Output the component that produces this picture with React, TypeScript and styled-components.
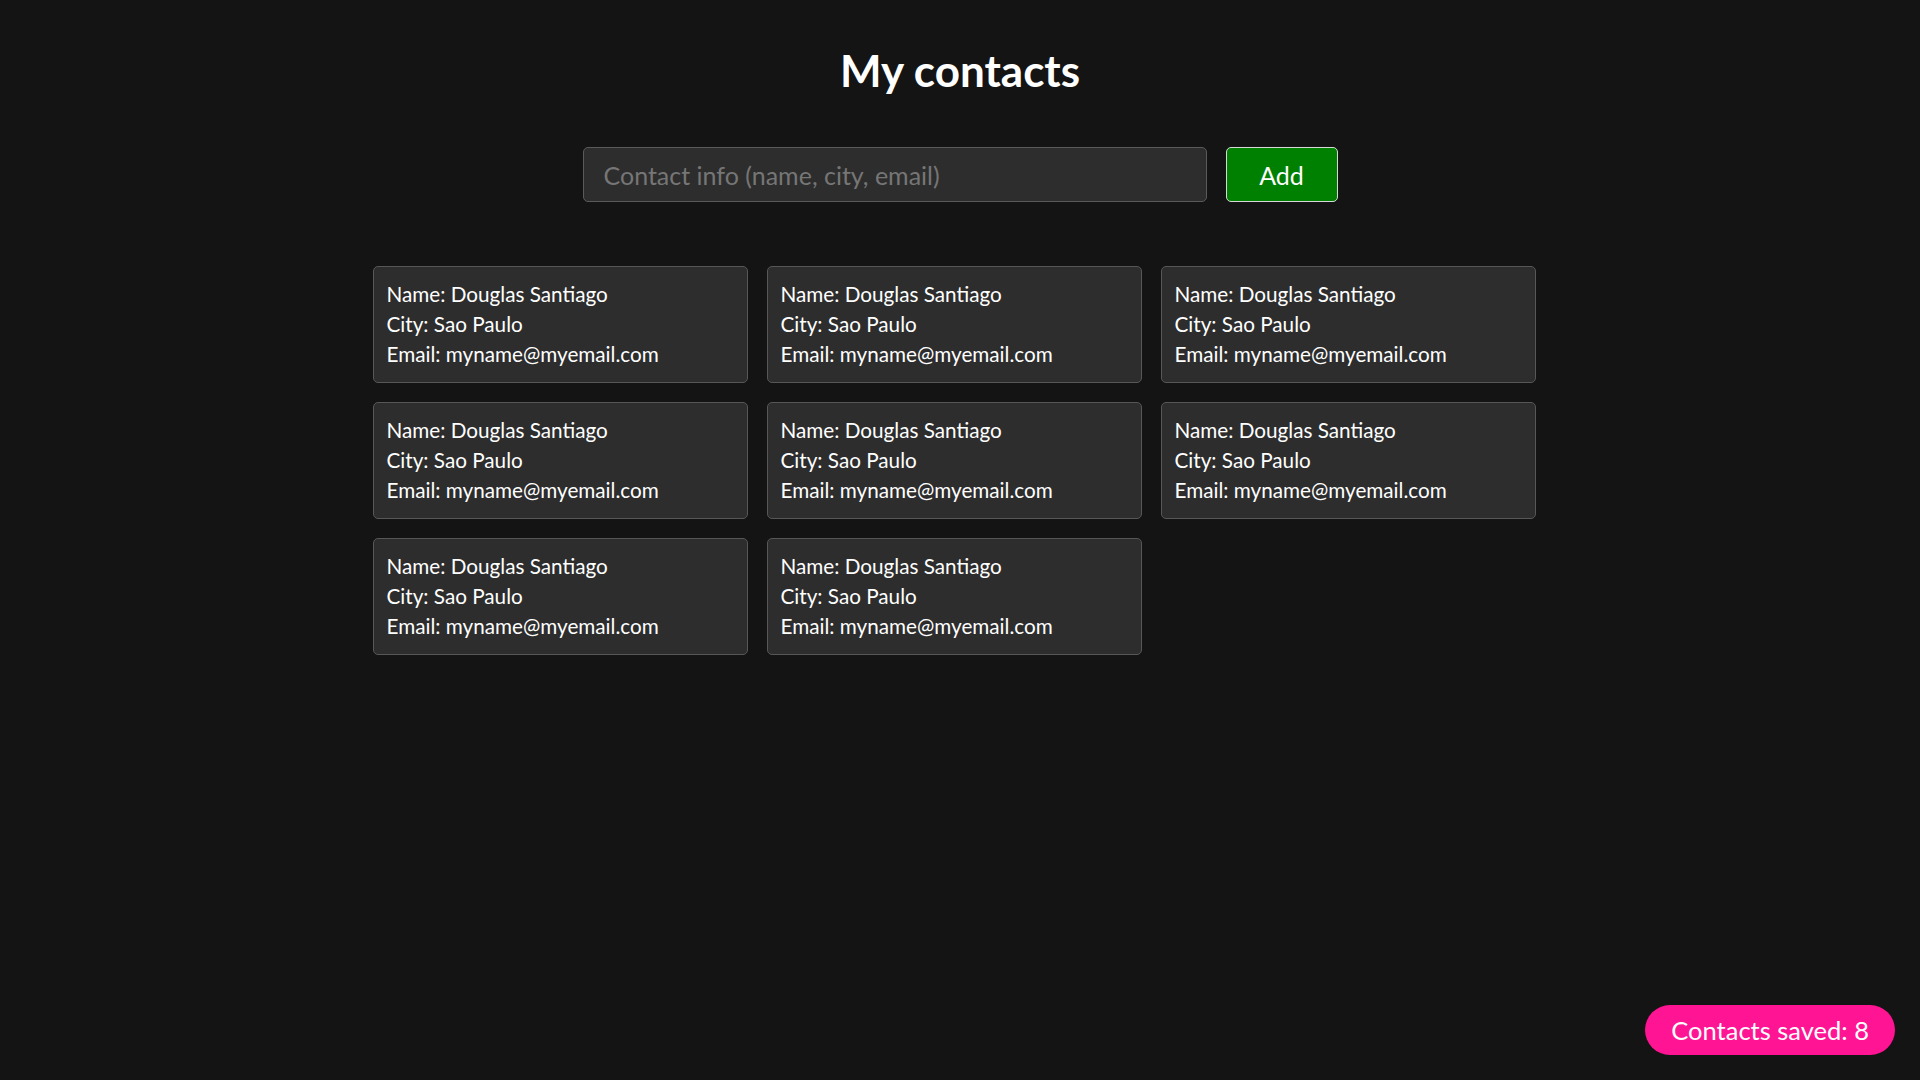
import React from "react";
import styled, { createGlobalStyle } from "styled-components";

const GlobalStyle = createGlobalStyle`
  html, body {
    margin: 0;
    padding: 0;
    background: #141414;
    color: #ffffff;
    font-family: Lato, "Noto Sans", sans-serif;
  }
  * { box-sizing: border-box; }
`;

const Page = styled.main`
  min-height: 100vh;
  display: flex;
  flex-direction: column;
  align-items: center;
  padding-top: 44px;
`;

const Title = styled.h1`
  margin: 0;
  font-size: 44px;
  line-height: 52px;
  font-weight: 700;
  color: #ffffff;
`;

const Form = styled.form`
  display: flex;
  align-items: center;
  gap: 19px;
  margin-top: 51px;
`;

const Input = styled.input`
  width: 624px;
  height: 55px;
  padding: 0 20px;
  background: #2d2d2d;
  border: 1px solid #5a5a5a;
  border-radius: 5px;
  color: #ffffff;
  font-family: inherit;
  font-size: 25px;
  outline: none;
  &::placeholder {
    color: #767676;
  }
`;

const AddButton = styled.button`
  width: 112px;
  height: 55px;
  background: #008000;
  border: 1px solid #d8d8d8;
  border-radius: 5px;
  color: #ffffff;
  font-family: inherit;
  font-size: 25px;
  cursor: pointer;
`;

const Grid = styled.section`
  display: grid;
  grid-template-columns: repeat(3, 375px);
  gap: 19px 19px;
  width: 1163px;
  margin-top: 64px;
  margin-left: -12px;
`;

const Card = styled.article`
  height: 117px;
  padding: 12px 13px;
  background: #2d2d2d;
  border: 1px solid #575757;
  border-radius: 5px;
`;

const Line = styled.p`
  margin: 0;
  font-size: 20.7px;
  line-height: 30px;
  color: #ffffff;
`;

const Counter = styled.div`
  position: fixed;
  right: 25px;
  bottom: 25px;
  height: 50px;
  padding: 0 26px;
  display: flex;
  align-items: center;
  background: #ff1493;
  border-radius: 25px;
  color: #ffffff;
  font-size: 25.5px;
`;

const contacts = Array.from({ length: 8 }, () => ({
  name: "Douglas Santiago",
  city: "Sao Paulo",
  email: "myname@myemail.com",
}));

export default function App() {
  return (
    <>
      <GlobalStyle />
      <Page>
        <Title>My contacts</Title>
        <Form onSubmit={(e) => e.preventDefault()}>
          <Input placeholder="Contact info (name, city, email)" />
          <AddButton type="submit">Add</AddButton>
        </Form>
        <Grid>
          {contacts.map((c, i) => (
            <Card key={i}>
              <Line>Name: {c.name}</Line>
              <Line>City: {c.city}</Line>
              <Line>Email: {c.email}</Line>
            </Card>
          ))}
        </Grid>
        <Counter>Contacts saved: {contacts.length}</Counter>
      </Page>
    </>
  );
}
